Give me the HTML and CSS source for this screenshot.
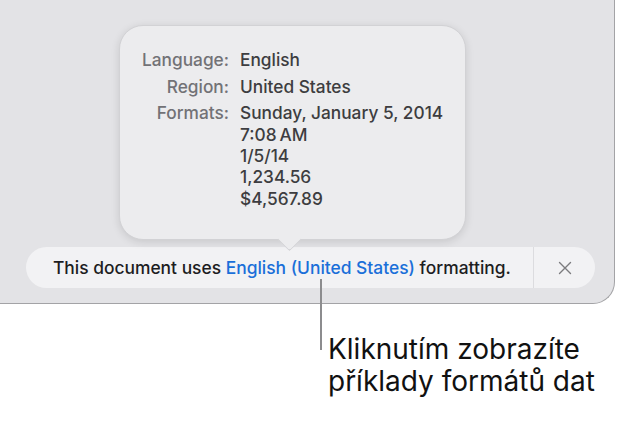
FILE: index.html
```html
<!DOCTYPE html>
<html>
<head>
<meta charset="utf-8">
<link rel="stylesheet" href="styles.css">
</head>
<body>
<div class="window">
  <div class="popover">
    <div class="info">
      <div class="label">Language:</div>
      <div class="value">English</div>
      <div class="label">Region:</div>
      <div class="value">United States</div>
      <div class="label">Formats:</div>
      <div class="value">Sunday, January 5, 2014<br>7:08&#8201;AM<br>1/5/14<br>1,234.56<br>$4,567.89</div>
    </div>
    <div class="arrow"></div>
  </div>
  <div class="bar">
    <div class="message">This document uses <span class="link">English (United States)</span> formatting.</div>
    <div class="close">
      <svg width="14" height="14" viewBox="0 0 14 14"><path d="M1.5 1.5 L12.5 12.5 M12.5 1.5 L1.5 12.5" stroke="#7b7b7e" stroke-width="1.4" stroke-linecap="round" fill="none"/></svg>
    </div>
  </div>
  <div class="callout-line"></div>
</div>
<div class="caption">Kliknutím zobrazíte<br>příklady formátů dat</div>
</body>
</html>
```
FILE: styles.css
```css
html, body {
  margin: 0;
  padding: 0;
  background: #ffffff;
}
body {
  width: 619px;
  height: 438px;
  overflow: hidden;
  font-family: Inter, "Liberation Sans", sans-serif;
}
.window {
  position: relative;
  width: 615px;
  height: 304px;
  box-sizing: border-box;
  padding-top: 247px;
  background: #e3e3e6;
  border-right: 1px solid #a3a3a6;
  border-bottom: 1px solid #a3a3a6;
  border-bottom-right-radius: 22px;
}
.popover {
  position: absolute;
  left: 119px;
  top: 25px;
  width: 347px;
  height: 215px;
  box-sizing: border-box;
  background: #ececee;
  border: 1px solid #d2d2d5;
  border-radius: 24px;
  box-shadow: 0 2px 8px rgba(0,0,0,0.12);
  z-index: 2;
  padding-top: 23px;
}
.arrow {
  position: absolute;
  left: 161px;
  bottom: -9px;
  width: 16px;
  height: 16px;
  background: #ececee;
  transform: rotate(45deg);
  border-bottom-right-radius: 3px;
  border-right: 1px solid #d2d2d5;
  border-bottom: 1px solid #d2d2d5;
}
.info {
  display: grid;
  grid-template-columns: 109px auto;
  column-gap: 11px;
  row-gap: 5.4px;
  font-size: 17.3px;
  line-height: 21.3px;
  font-weight: 500;
}
.label {
  text-align: right;
  color: #727276;
}
.value {
  color: #3d3d40;
}
.bar {
  margin-left: 26px;
  width: 569px;
  height: 41px;
  background: #f2f2f4;
  border-radius: 21px;
  display: flex;
  align-items: center;
}
.message {
  flex: 1;
  padding-left: 27px;
  font-size: 17.4px;
  font-weight: 500;
  color: #1d1d1f;
}
.link {
  color: #1a6fd9;
}
.close {
  width: 62px;
  height: 41px;
  border-left: 1px solid #dcdcdf;
  display: flex;
  align-items: center;
  justify-content: center;
  box-sizing: border-box;
}
.close svg {
  display: block;
}
.callout-line {
  position: absolute;
  left: 320px;
  top: 279px;
  width: 2px;
  height: 71px;
  background: #8c8c8e;
  z-index: 3;
}
.caption {
  margin-left: 328px;
  margin-top: 29px;
  font-size: 28px;
  line-height: 32px;
  color: #111111;
}
```
